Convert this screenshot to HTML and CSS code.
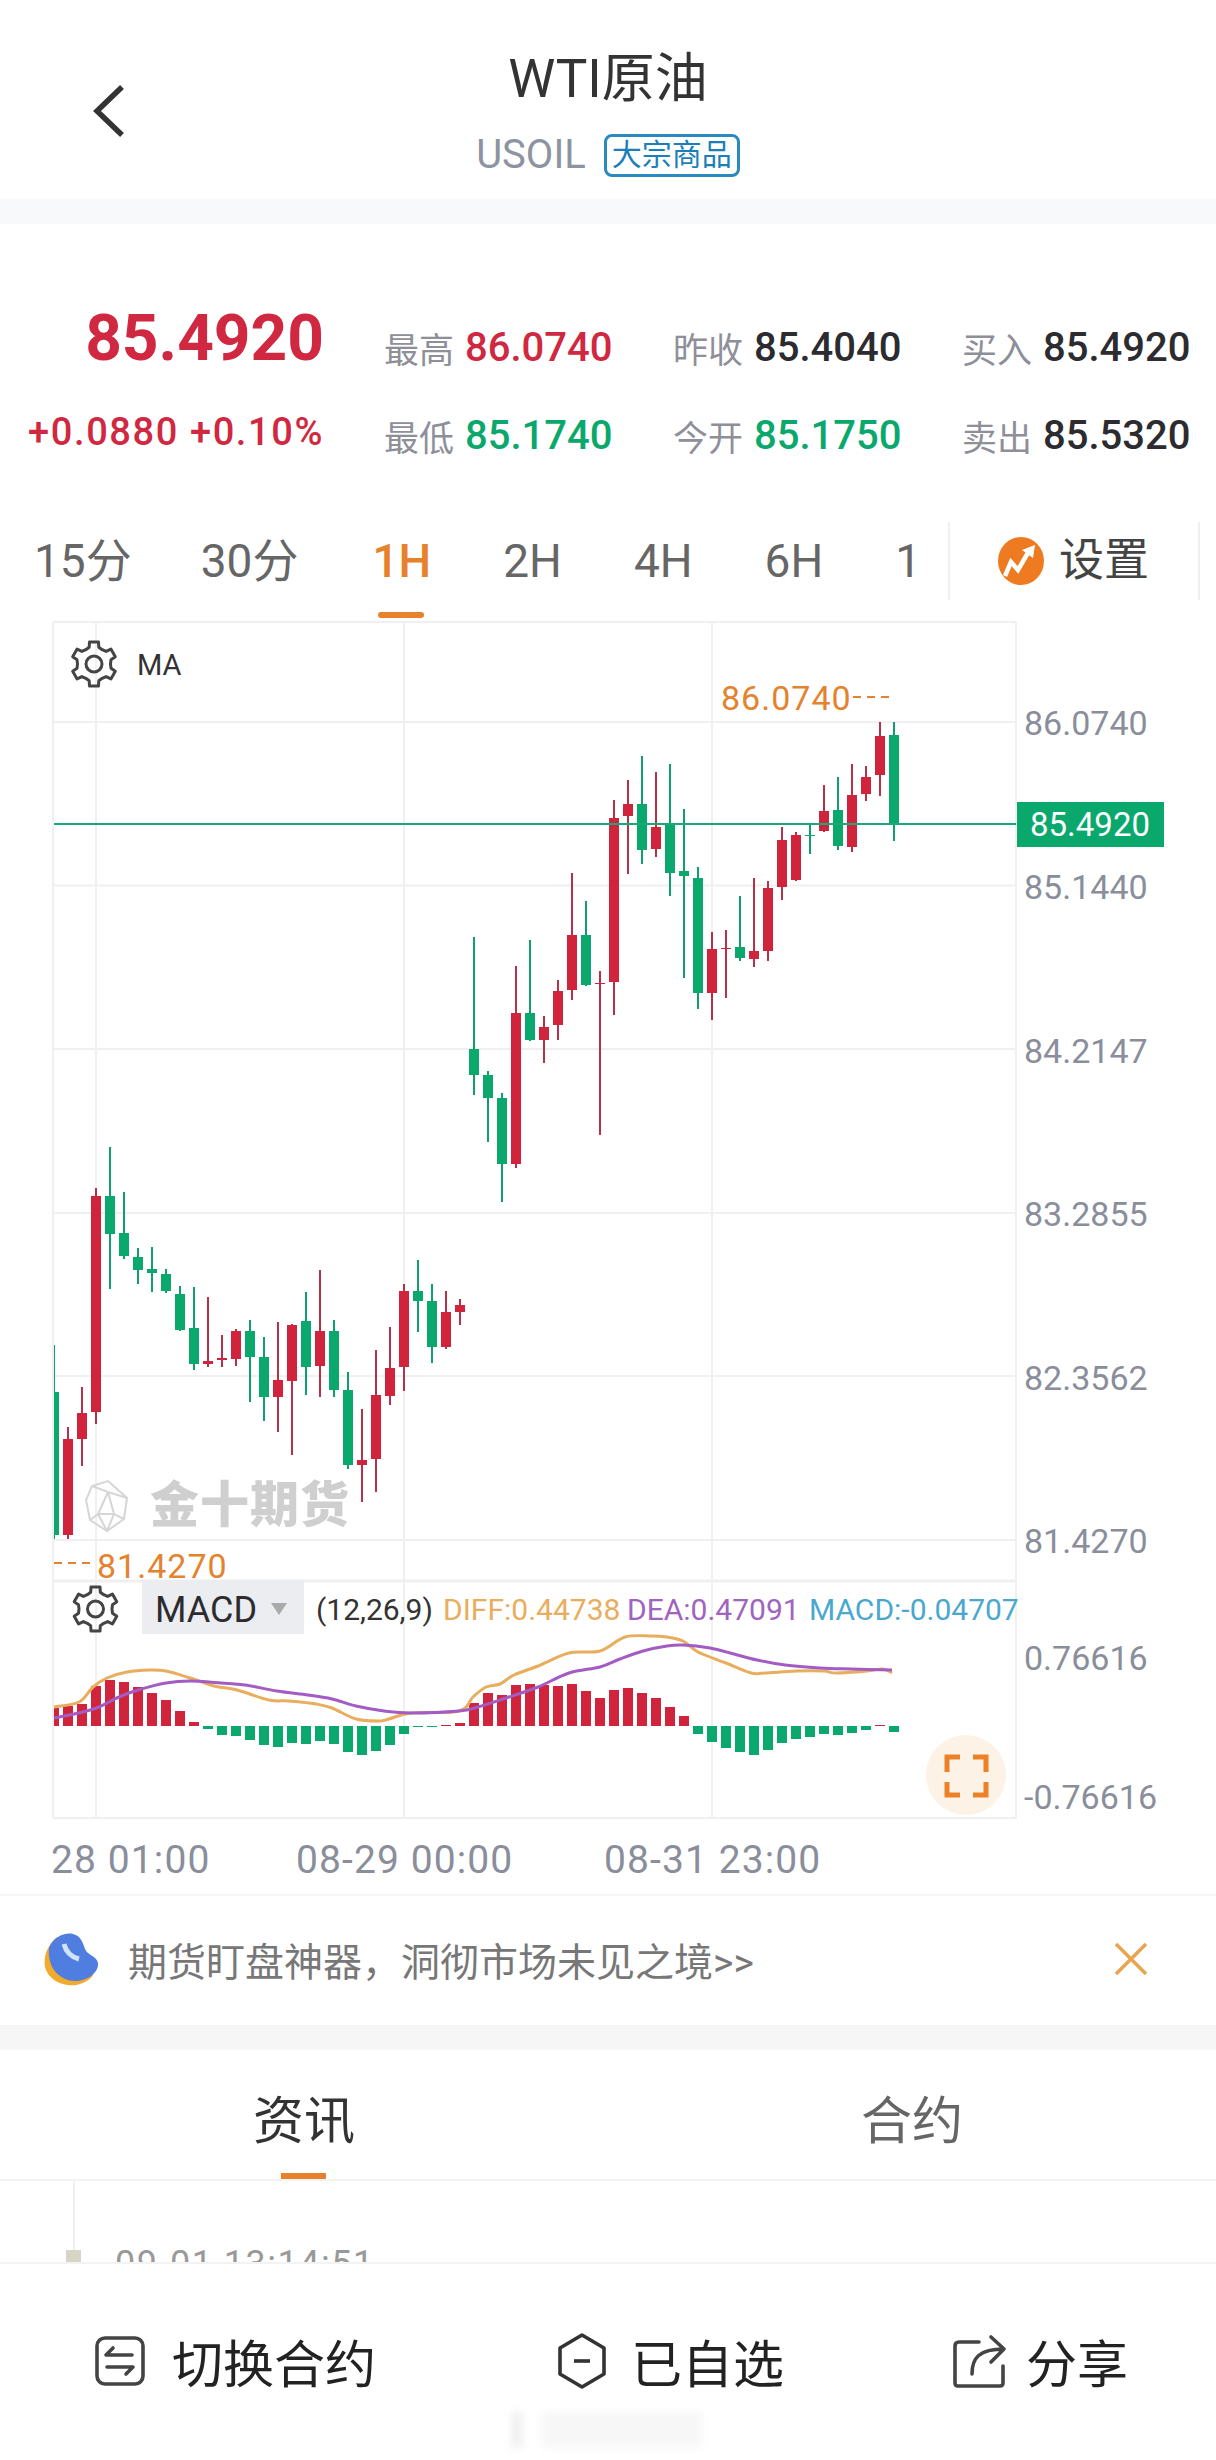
FILE: index.html
```html
<!DOCTYPE html>
<html lang="zh-CN">
<head>
  <meta charset="UTF-8">
  <meta name="viewport" content="width=device-width, initial-scale=1.0">
  <title>WTI原油</title>
  <link rel="stylesheet" href="styles.css">
</head>
<body>
  <header class="nav">
    <svg class="back" width="32" height="54" viewBox="0 0 32 54"><path d="M29 3 L4 27 L29 51" fill="none" stroke="#333" stroke-width="5.5"/></svg>
    <div class="nav-title">
      <h1>WTI原油</h1>
      <div class="nav-sub"><span class="code">USOIL</span><span class="badge">大宗商品</span></div>
    </div>
  </header>
  <div class="band"></div>

  <section class="quote">
    <div class="quote-main">
      <div class="price">85.4920</div>
      <div class="change">+0.0880 +0.10%</div>
    </div>
    <div class="quote-grid">
      <div class="stat"><span>最高</span><b class="up">86.0740</b></div>
      <div class="stat"><span>昨收</span><b>85.4040</b></div>
      <div class="stat"><span>买入</span><b>85.4920</b></div>
      <div class="stat"><span>最低</span><b class="down">85.1740</b></div>
      <div class="stat"><span>今开</span><b class="down">85.1750</b></div>
      <div class="stat"><span>卖出</span><b>85.5320</b></div>
    </div>
  </section>

  <nav class="periods">
    <div class="period-list">
      <a>15分</a><a>30分</a><a class="active">1H</a><a>2H</a><a>4H</a><a>6H</a><a>1</a>
    </div>
    <div class="period-set">
      <svg width="46" height="48" viewBox="0 0 46 48">
        <ellipse cx="23" cy="24" rx="23" ry="24" fill="#ee7a22"/>
        <path d="M7 39 L13 25 L20 33 L31 14" fill="none" stroke="#fff" stroke-width="4.5"/>
        <path d="M37 8 L24 13 L35 21 Z" fill="#fff"/>
      </svg>
      <span>设置</span>
    </div>
  </nav>

  <svg id="chart" class="chart" width="1216" height="1274" viewBox="0 620 1216 1274"></svg>

  <div class="promo">
    <svg width="58" height="56" viewBox="0 0 58 56">
      <path d="M14 6 C5 14 0 24 2 36 C5 49 20 56 33 54 C42 52 48 48 50 44 L14 6 Z" fill="#f0aa2c"/>
      <path d="M6 17 C10 6 22 1 30 3 C38 5 40 12 42 18 C44 24 54 25 55 32 C56 42 44 50 32 50 C18 50 4 38 6 17 Z" fill="#4f7de0"/>
      <path d="M21 13 C23 21 28 26 36 28" fill="none" stroke="#cfe4fb" stroke-width="5"/>
    </svg>
    <span class="promo-text">期货盯盘神器，洞彻市场未见之境&gt;&gt;</span>
    <svg class="promo-close" width="34" height="34" viewBox="0 0 34 34"><path d="M2 2 L32 32 M32 2 L2 32" stroke="#e8a44e" stroke-width="3.5"/></svg>
  </div>
  <div class="band band-gray"></div>

  <div class="tabs">
    <div class="tab active">资讯</div>
    <div class="tab">合约</div>
  </div>

  <div class="news">
    <div class="rail"><i></i><em></em></div>
    <div class="news-time">09-01 13:14:51</div>
  </div>

  <footer class="bar">
    <div class="bar-item item-switch">
      <svg width="50" height="50" viewBox="0 0 50 50" fill="none" stroke="#444" stroke-width="3.6" stroke-linecap="round" stroke-linejoin="round">
        <rect x="2" y="2" width="46" height="46" rx="8"/>
        <path d="M37 19 H11 L18 12 M12 31 H38 L31 38"/>
      </svg>
      <span>切换合约</span>
    </div>
    <div class="bar-item item-fav">
      <svg width="50" height="56" viewBox="0 0 50 56" fill="none" stroke="#333" stroke-width="3.6" stroke-linejoin="round">
        <path d="M25 2 L47 15 V41 L25 54 L3 41 V15 Z"/>
        <path d="M17 28 H33"/>
      </svg>
      <span>已自选</span>
    </div>
    <div class="bar-item item-share">
      <svg width="54" height="54" viewBox="0 0 54 54" fill="none" stroke="#444" stroke-width="3.6" stroke-linecap="round" stroke-linejoin="round">
        <path d="M26 8 H6 Q2 8 2 12 V49 Q2 52 5 52 H47 Q50 52 50 49 V32"/>
        <path d="M19 40 C19 24 26 15 51 15 M38 3 L51 15 L38 28"/>
      </svg>
      <span>分享</span>
    </div>
  </footer>
  <div class="home-mark"></div>

  <script>
    // [影线上, 实体上, 实体下, 影线下, 颜色] 都是页面像素
    const candles = [
      [1345,1392,1535,1539,'g'],[1427,1439,1535,1539,'r'],[1387,1413,1439,1466,'r'],[1188,1196,1412,1424,'r'],
      [1147,1196,1234,1289,'g'],[1192,1233,1256,1259,'g'],[1248,1257,1270,1284,'g'],[1247,1269,1273,1292,'g'],
      [1269,1274,1291,1293,'g'],[1286,1294,1330,1331,'g'],[1287,1328,1364,1370,'g'],[1297,1361,1364,1367,'r'],
      [1335,1358,1360,1367,'r'],[1329,1331,1359,1366,'r'],[1320,1331,1357,1402,'g'],[1337,1357,1397,1421,'g'],
      [1322,1380,1397,1432,'r'],[1324,1325,1381,1455,'r'],[1292,1321,1367,1395,'g'],[1270,1331,1366,1397,'r'],
      [1320,1331,1390,1397,'g'],[1372,1390,1465,1469,'g'],[1409,1460,1465,1502,'r'],[1350,1395,1459,1492,'r'],
      [1327,1368,1396,1405,'r'],[1284,1291,1367,1391,'r'],[1260,1291,1301,1332,'g'],[1284,1301,1347,1363,'g'],
      [1291,1312,1347,1349,'r'],[1299,1305,1312,1325,'r'],[937,1049,1075,1095,'g'],[1071,1075,1098,1142,'g'],
      [1093,1098,1164,1202,'g'],[966,1013,1164,1168,'r'],[940,1013,1040,1041,'g'],[1016,1027,1040,1063,'r'],
      [980,991,1025,1040,'r'],[873,935,990,1000,'r'],[901,935,985,986,'g'],[971,983,984,1135,'r'],
      [800,818,982,1015,'r'],[780,804,816,874,'r'],[756,804,850,864,'g'],[772,827,849,857,'r'],
      [764,824,873,896,'g'],[809,871,876,978,'g'],[867,878,993,1009,'g'],[932,949,993,1020,'r'],
      [930,948,949,998,'r'],[896,947,958,961,'g'],[878,951,959,967,'r'],[881,888,951,961,'r'],
      [827,840,887,900,'r'],[832,835,880,881,'r'],[824,835,836,854,'g'],[785,811,831,832,'r'],
      [777,810,846,850,'g'],[764,795,847,852,'r'],[766,777,794,801,'r'],[722,736,775,796,'r'],[722,735,824,841,'g']
    ];
    const macd = [18,20,22,40,46,44,39,33,26,15,4,-3,-9,-10,-14,-19,-21,-17,-18,-15,-18,-26,-29,-25,-19,-8,-1,-1,1,3,
      23,33,31,41,42,41,40,42,35,28,36,38,33,28,19,10,-8,-16,-22,-26,-29,-24,-17,-13,-11,-8,-9,-7,-4,1,-6];
    const diffLine = [[54,1707],[79,1702],[93,1687],[107,1678],[127,1672],[150,1670],[166,1671],[190,1678],[214,1686],[237,1690],[269,1700],[289,1701],[316,1704],[332,1708],[356,1719],[380,1721],[389,1719],[411,1713],[459,1711],[473,1697],[486,1687],[500,1684],[514,1675],[538,1666],[569,1653],[600,1651],[625,1637],[651,1636],[667,1637],[683,1641],[698,1652],[726,1663],[751,1673],[765,1673],[796,1671],[824,1671],[836,1673],[867,1671],[883,1669],[892,1673]];
    const deaLine = [[54,1718],[79,1713],[99,1707],[119,1697],[138,1690],[166,1683],[190,1681],[221,1683],[245,1685],[277,1691],[308,1695],[332,1699],[356,1706],[384,1711],[411,1713],[459,1711],[478,1707],[506,1698],[538,1687],[569,1673],[600,1667],[620,1659],[643,1651],[667,1646],[683,1645],[710,1648],[734,1654],[757,1660],[785,1665],[820,1668],[851,1669],[892,1670]];
    const axis = [['86.0740',735],['85.1440',899],['84.2147',1063],['83.2855',1226],['82.3562',1390],['81.4270',1553],['0.76616',1670],['-0.76616',1809]];

    function gearPath(cx, cy) {
      let d = '';
      for (let t = 0; t < 6; t++) {
        const a = t * Math.PI / 3 - Math.PI / 2;
        [[-0.52, 16.5], [-0.28, 17.5], [-0.2, 22.5], [0.2, 22.5], [0.28, 17.5], [0.52, 16.5]].forEach(([da, r], i) => {
          const x = cx + r * Math.cos(a + da), y = cy + r * Math.sin(a + da);
          d += (t === 0 && i === 0 ? 'M' : 'L') + x.toFixed(1) + ' ' + y.toFixed(1);
        });
      }
      return d + 'Z';
    }

    function gear(cx, cy) {
      return `<path d="${gearPath(cx, cy)}" class="gear"/><circle cx="${cx}" cy="${cy}" r="8" class="gear"/>`;
    }

    // 折线平滑
    function smooth(pts) {
      let d = `M${pts[0][0]} ${pts[0][1]}`;
      for (let i = 0; i < pts.length - 1; i++) {
        const p0 = pts[i - 1] || pts[i], p1 = pts[i], p2 = pts[i + 1], p3 = pts[i + 2] || p2;
        const c1 = [p1[0] + (p2[0] - p0[0]) / 6, p1[1] + (p2[1] - p0[1]) / 6];
        const c2 = [p2[0] - (p3[0] - p1[0]) / 6, p2[1] - (p3[1] - p1[1]) / 6];
        d += `C${c1[0].toFixed(1)} ${c1[1].toFixed(1)} ${c2[0].toFixed(1)} ${c2[1].toFixed(1)} ${p2[0]} ${p2[1]}`;
      }
      return d;
    }

    let s = '<defs><clipPath id="plot"><rect x="54" y="620" width="962" height="1200"/></clipPath></defs>';

    // 网格
    [622, 722, 885.6, 1049, 1213, 1376, 1540].forEach(y => { s += `<line x1="53" x2="1016" y1="${y}" y2="${y}" class="grid"/>`; });
    s += '<line x1="53" x2="1017" y1="1581" y2="1581" class="grid grid-thick"/><line x1="53" x2="1017" y1="1818" y2="1818" class="grid"/>';
    [53, 96, 404, 712, 1016].forEach(x => { s += `<line x1="${x}" x2="${x}" y1="622" y2="1818" class="grid"/>`; });

    // 水印
    s += '<g class="wm-logo"><path d="M108 1481 L127 1498 L124 1519 L107 1531 L90 1520 L86 1500 L92 1486 Z"/><path d="M92 1486 L108 1492 L127 1498 M108 1492 L114 1514 L107 1531 M108 1492 L98 1514 L90 1520 M98 1514 L114 1514 L124 1519 M98 1514 L107 1531"/></g>';
    s += '<text x="150" y="1522" class="wm-text">金十期货</text>';

    // K线
    s += '<g clip-path="url(#plot)">';
    candles.forEach(([hi, top, bottom, lo, c], i) => {
      const x = 54 + i * 14;
      s += `<rect x="${x - 1}" y="${hi}" width="2" height="${lo - hi}" class="wick-${c}"/>`;
      s += `<rect x="${x - 5}" y="${top}" width="10" height="${bottom - top}" class="body-${c}"/>`;
    });
    s += '</g>';

    // 现价线
    s += '<line x1="54" x2="1016" y1="824" y2="824" class="last-line"/>';
    s += '<rect x="1017" y="802" width="147" height="45" class="last-tag"/><text x="1090" y="836" class="last-text">85.4920</text>';

    // 最高最低
    s += '<text x="721" y="710" class="hl">86.0740</text><line x1="853" x2="894" y1="697" y2="697" class="hl-dash"/>';
    s += '<text x="97" y="1578" class="hl">81.4270</text><line x1="54" x2="96" y1="1563" y2="1563" class="hl-dash"/>';

    // 坐标
    axis.forEach(([t, y]) => { s += `<text x="1024" y="${y}" class="axis">${t}</text>`; });
    [['28 01:00', 51], ['08-29 00:00', 296], ['08-31 23:00', 604]].forEach(([t, x]) => { s += `<text x="${x}" y="1873" class="axis date">${t}</text>`; });

    // 指标栏
    s += gear(94, 664) + '<text x="137" y="675" class="ma">MA</text>';
    s += gear(95.5, 1609);
    s += '<rect x="142" y="1580" width="162" height="54" class="chip"/><text x="155" y="1622" class="chip-text">MACD</text><path d="M271 1603 H287 L279 1615 Z" class="chip-arrow"/>';
    s += '<text x="316" y="1620" class="param">(12,26,9)</text>';
    s += '<text x="443" y="1620" class="param p-diff">DIFF:0.44738</text><text x="627" y="1620" class="param p-dea">DEA:0.47091</text><text x="809" y="1620" class="param p-macd">MACD:-0.04707</text>';

    // MACD柱
    s += '<g clip-path="url(#plot)">';
    macd.forEach((v, i) => {
      const x = 54 + i * 14;
      s += `<rect x="${x - 5}" y="${v > 0 ? 1726 - v : 1726}" width="10" height="${Math.abs(v)}" class="body-${v > 0 ? 'r' : 'g'}"/>`;
    });
    s += `</g><path d="${smooth(diffLine)}" class="line-diff"/><path d="${smooth(deaLine)}" class="line-dea"/>`;

    // 全屏按钮
    s += '<circle cx="966" cy="1775" r="40" class="full-bg"/><path d="M947 1772 V1757 H960 M973 1757 H986 V1772 M947 1782 V1795 H960 M973 1795 H986 V1782" class="full-icon"/>';

    document.getElementById('chart').innerHTML = s;
  </script>
</body>
</html>
```

FILE: styles.css
```css
* {
  box-sizing: border-box;
}
body {
  width: 1216px;
  height: 2460px;
  margin: 0;
  overflow: hidden;
  background: #fff;
  color: #333;
  font-family: Roboto, "Noto Sans CJK SC", sans-serif;
}
svg {
  display: block;
}

/* 顶部 */
.nav {
  height: 199px;
  position: relative;
  display: flex;
  justify-content: center;
  padding-top: 49px;
}
.back {
  position: absolute;
  left: 93px;
  top: 84px;
}
.nav-title {
  display: flex;
  flex-direction: column;
  align-items: center;
}
h1 {
  margin: 0;
  font-size: 53px;
  line-height: 60px;
  font-weight: 400;
}
.nav-sub {
  display: flex;
  align-items: center;
  gap: 18px;
  margin-top: 24px;
}
.code {
  font-size: 40px;
  line-height: 44px;
  color: #8e93a1;
}
.badge {
  height: 43px;
  width: 136px;
  border: 3px solid #2a8ac0;
  border-radius: 8px;
  color: #1b7fb8;
  font-size: 30px;
  line-height: 36px;
  text-align: center;
}
.band {
  height: 25px;
  background: #f8f9fb;
}

/* 行情 */
.quote {
  height: 298px;
  display: flex;
  padding-top: 80px;
}
.quote-main {
  width: 324px;
  flex-shrink: 0;
  text-align: right;
}
.price {
  font-size: 64px;
  line-height: 70px;
  font-weight: 700;
  color: #cf2840;
}
.change {
  margin-top: 36px;
  font-size: 38px;
  line-height: 44px;
  font-weight: 500;
  letter-spacing: 1.6px;
  color: #cf2840;
  white-space: nowrap;
}
.quote-grid {
  margin-left: 60px;
  display: grid;
  grid-template-columns: repeat(3, 289px);
  grid-auto-rows: 88px;
  padding-top: 18px;
  flex-shrink: 0;
}
.stat {
  display: flex;
  align-items: center;
  height: 50px;
}
.stat span {
  width: 81px;
  font-size: 35px;
  color: #8e8f99;
}
.stat b {
  font-size: 40px;
  font-weight: 500;
  color: #2c2c30;
}
.stat b.up {
  color: #cf2840;
}
.stat b.down {
  color: #0aa86c;
}

/* 周期 */
.periods {
  height: 98px;
  display: flex;
  align-items: flex-start;
}
.period-list {
  width: 917px;
  height: 98px;
  padding-left: 34px;
  display: flex;
  gap: 72px;
  white-space: nowrap;
  flex-shrink: 0;
}
.period-list a {
  position: relative;
  font-size: 46px;
  line-height: 78px;
  color: #666;
}
.period-list a:nth-child(2) {
  margin-left: -3px;
}
.period-list a:nth-child(3) {
  margin-left: 2px;
}
.period-list a.active {
  color: #e8812c;
  font-weight: 500;
}
.period-list a.active::after {
  content: "";
  position: absolute;
  left: 6px;
  right: 7px;
  top: 90px;
  height: 6px;
  border-radius: 3px;
  background: #e8812c;
}
.period-set {
  margin-left: 31px;
  width: 252px;
  height: 78px;
  border-left: 2px solid #f0f0f0;
  border-right: 2px solid #f0f0f0;
  display: flex;
  align-items: center;
  padding-left: 48px;
  gap: 15px;
  font-size: 45px;
  line-height: 74px;
  color: #444;
}

/* 图表 */
.chart {
  font-family: Roboto, sans-serif;
}
.grid {
  stroke: #f0f0f0;
  stroke-width: 2;
}
.grid-thick {
  stroke-width: 3;
}
.wick-r {
  fill: #b5324a;
}
.wick-g {
  fill: #0f9f6e;
}
.body-r {
  fill: #d0243c;
}
.body-g {
  fill: #0aa86c;
}
.last-line {
  stroke: #19a877;
  stroke-width: 2;
}
.last-tag {
  fill: #0aa86c;
}
.last-text {
  fill: #fff;
  font-size: 33px;
  text-anchor: middle;
}
.axis {
  fill: #8a8e9b;
  font-size: 34px;
}
.date {
  font-size: 39px;
  letter-spacing: 1.1px;
}
.hl {
  fill: #e5822e;
  font-size: 34px;
  letter-spacing: 1px;
}
.hl-dash {
  stroke: #e5822e;
  stroke-width: 2;
  stroke-dasharray: 8 6;
}
.gear {
  fill: none;
  stroke: #444;
  stroke-width: 3;
  stroke-linejoin: round;
}
.ma {
  fill: #333;
  font-size: 29px;
}
.chip {
  fill: #ebedf0;
}
.chip-text {
  fill: #2c2c30;
  font-size: 36px;
}
.chip-arrow {
  fill: #aaa;
}
.param {
  fill: #333;
  font-size: 30px;
}
.p-diff {
  fill: #e9ad5e;
}
.p-dea {
  fill: #a064c0;
}
.p-macd {
  fill: #4aa8cf;
}
.line-diff, .line-dea {
  fill: none;
  stroke-width: 3;
  stroke-linejoin: round;
}
.line-diff {
  stroke: #e9ad5e;
}
.line-dea {
  stroke: #a35cc4;
}
.full-bg {
  fill: #fdf2e6;
}
.full-icon {
  fill: none;
  stroke: #ec8128;
  stroke-width: 5;
}
.wm-logo {
  fill: none;
  stroke: #d6d6d6;
  stroke-width: 2;
}
.wm-text {
  fill: #cfcfcf;
  font-family: "Noto Sans CJK SC", sans-serif;
  font-size: 49px;
  font-weight: 900;
  letter-spacing: 1px;
}

/* 广告条 */
.promo {
  height: 131px;
  display: flex;
  align-items: center;
  padding-left: 43px;
  padding-bottom: 3px;
  border-top: 2px solid #f5f5f5;
}
.promo-text {
  margin-left: 27px;
  font-size: 39px;
  color: #777;
}
.promo-close {
  margin-left: auto;
  margin-right: 68px;
}
.band-gray {
  background: #f6f6f6;
}

/* 资讯 合约 */
.tabs {
  height: 131px;
  display: flex;
  border-bottom: 2px solid #f3f3f3;
}
.tab {
  position: relative;
  width: 608px;
  text-align: center;
  padding-top: 40px;
  font-size: 51px;
  line-height: 64px;
  color: #666;
}
.tab.active {
  color: #333;
}
.tab.active::after {
  content: "";
  position: absolute;
  left: 281px;
  top: 123px;
  width: 45px;
  height: 6px;
  background: #e8812c;
}

.news {
  height: 81px;
  display: flex;
  padding-left: 66px;
  overflow: hidden;
}
.rail {
  width: 15px;
  display: flex;
  flex-direction: column;
  align-items: center;
}
.rail i {
  flex: 1;
  width: 2px;
  background: #efefef;
}
.rail em {
  width: 15px;
  height: 12px;
  background: #d8d5c8;
}
.news-time {
  align-self: flex-end;
  margin: 0 0 -24px 34px;
  font-size: 36px;
  line-height: 44px;
  letter-spacing: 1.5px;
  color: #999;
}

/* 底栏 */
.bar {
  height: 195px;
  border-top: 2px solid #f3f3f3;
  display: flex;
  align-items: center;
}
.bar-item {
  display: flex;
  align-items: center;
  font-size: 51px;
  color: #222;
}
.item-switch {
  margin-left: 95px;
  gap: 27px;
}
.item-fav {
  margin-left: 181px;
  gap: 24px;
}
.item-share {
  margin-left: 169px;
  gap: 19px;
}
.home-mark {
  position: absolute;
  left: 512px;
  top: 2412px;
  width: 200px;
  height: 36px;
  background: linear-gradient(90deg, #eee 0 10px, #fff 10px 30px, #f7f7f7 30px 190px, #fff 190px);
  filter: blur(4px);
}
```
